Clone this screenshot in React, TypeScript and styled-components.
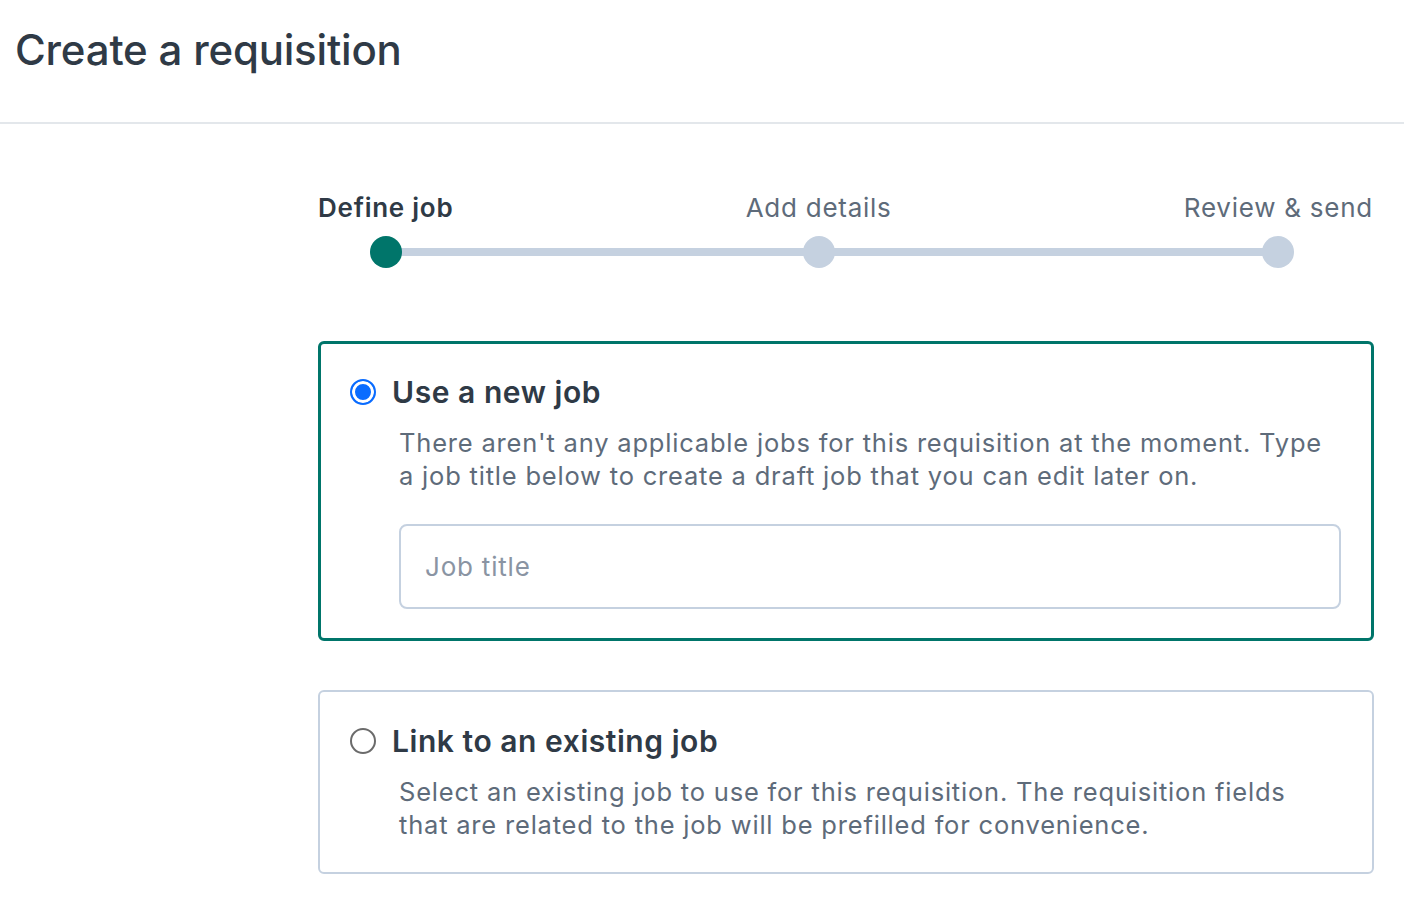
import React from "react";
import styled, { createGlobalStyle } from "styled-components";

const Global = createGlobalStyle`
  html, body { margin: 0; padding: 0; background: #ffffff; }
  body { font-family: Inter, "Noto Sans", sans-serif; color: #2f3a46; }
  * { box-sizing: border-box; }
`;

const Page = styled.div`
  width: 1404px;
  min-height: 901px;
  background: #fff;
`;

const Header = styled.header`
  height: 124px;
  border-bottom: 2px solid #e3e7eb;
  padding: 21px 0 0 15px;
`;

const Title = styled.h1`
  margin: 0;
  font-size: 42px;
  line-height: 58px;
  font-weight: 500;
  color: #2f3a46;
  letter-spacing: -0.2px;
`;

const Content = styled.main`
  width: 1056px;
  margin-left: 318px;
  padding-top: 66px;
`;

const Stepper = styled.div`
  position: relative;
  display: grid;
  grid-template-columns: auto 1fr auto;
  margin-right: 1px;
  margin-bottom: 73px;
`;

const Step = styled.div<{ $align: "start" | "center" | "end" }>`
  display: flex;
  flex-direction: column;
  align-items: center;
  justify-self: ${(p) => p.$align};
  position: relative;
  z-index: 1;
`;

const StepLabel = styled.span<{ $active?: boolean }>`
  font-size: 26px;
  line-height: 36px;
  letter-spacing: 0.75px;
  font-weight: ${(p) => (p.$active ? 600 : 400)};
  color: ${(p) => (p.$active ? "#2f3a46" : "#5e6b7a")};
  white-space: nowrap;
`;

const Dot = styled.span<{ $active?: boolean }>`
  width: 32px;
  height: 32px;
  border-radius: 50%;
  margin-top: 10px;
  background: ${(p) => (p.$active ? "#00756a" : "#c5d1e0")};
`;

const Track = styled.div`
  position: absolute;
  left: 68px;
  right: 94px;
  top: 58px;
  height: 8px;
  background: #c5d1e0;
  z-index: 0;
`;

const Cards = styled.div`
  display: flex;
  flex-direction: column;
  gap: 49px;
`;

const Card = styled.label<{ $selected?: boolean }>`
  display: block;
  border: ${(p) => (p.$selected ? "3px solid #00756a" : "2px solid #c5d1e0")};
  border-radius: 6px;
  padding: ${(p) => (p.$selected ? "30px 30px 29px 29px" : "31px 31px 31px 30px")};
`;

const OptionRow = styled.div`
  display: flex;
  align-items: center;
  gap: 16px;
`;

const Radio = styled.span<{ $checked?: boolean }>`
  width: 26px;
  height: 26px;
  border-radius: 50%;
  flex: none;
  border: ${(p) => (p.$checked ? "2px solid #0a6cff" : "2px solid #6b6b6b")};
  background: ${(p) => (p.$checked ? "#0a6cff" : "#fff")};
  box-shadow: ${(p) => (p.$checked ? "inset 0 0 0 3px #fff" : "none")};
`;

const OptionTitle = styled.span`
  font-size: 30px;
  line-height: 36px;
  font-weight: 600;
  letter-spacing: 0.55px;
  color: #2f3a46;
`;

const Description = styled.p`
  margin: 16px 0 0 49px;
  font-size: 25.5px;
  line-height: 33px;
  letter-spacing: 0.8px;
  color: #5e6b7a;
  font-weight: 400;
`;

const Input = styled.input`
  display: block;
  margin: 32px 0 0 49px;
  width: calc(100% - 49px);
  height: 85px;
  border: 2px solid #c5d1e0;
  border-radius: 8px;
  padding: 0 24px;
  font-family: Inter, "Noto Sans", sans-serif;
  font-size: 26px;
  letter-spacing: 0.8px;
  color: #2f3a46;
  outline: none;
  &::placeholder { color: #8a94a3; }
`;

export default function App() {
  return (
    <Page>
      <Global />
      <Header>
        <Title>Create a requisition</Title>
      </Header>
      <Content>
        <Stepper>
          <Track />
          <Step $align="start">
            <StepLabel $active>Define job</StepLabel>
            <Dot $active />
          </Step>
          <Step $align="center">
            <StepLabel>Add details</StepLabel>
            <Dot />
          </Step>
          <Step $align="end">
            <StepLabel>Review &amp; send</StepLabel>
            <Dot />
          </Step>
        </Stepper>
        <Cards>
          <Card $selected>
            <OptionRow>
              <Radio $checked />
              <OptionTitle>Use a new job</OptionTitle>
            </OptionRow>
            <Description>
              There aren't any applicable jobs for this requisition at the moment. Type
              a job title below to create a draft job that you can edit later on.
            </Description>
            <Input placeholder="Job title" />
          </Card>
          <Card>
            <OptionRow>
              <Radio />
              <OptionTitle>Link to an existing job</OptionTitle>
            </OptionRow>
            <Description>
              Select an existing job to use for this requisition. The requisition fields
              that are related to the job will be prefilled for convenience.
            </Description>
          </Card>
        </Cards>
      </Content>
    </Page>
  );
}
